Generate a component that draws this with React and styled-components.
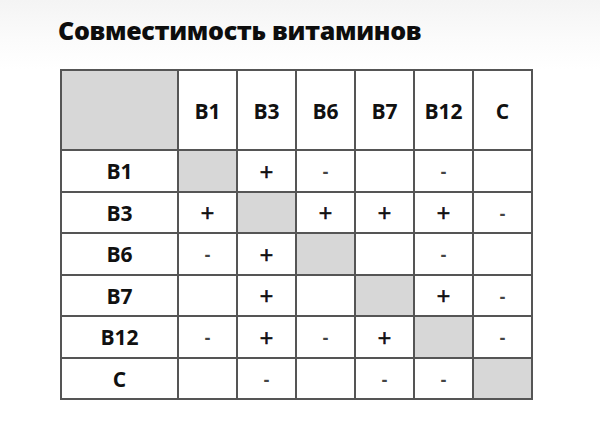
import React from "react";
import styled, { createGlobalStyle } from "styled-components";

const Global = createGlobalStyle`
  html, body { margin: 0; padding: 0; background: #fff; }
  body { font-family: "Open Sans", "Liberation Sans", sans-serif; color: #111; }
`;

const Page = styled.div`
  width: 600px;
  height: 437px;
  box-sizing: border-box;
  padding: 13px 0 0 58px;
  background: linear-gradient(#f4f4f4 0px, #fbfbfb 40px, #ffffff 70px);
  overflow: hidden;
`;

const Title = styled.h1`
  margin: 0;
  font-size: 25px;
  font-weight: 800;
  line-height: 34px;
  letter-spacing: -0.3px;
  color: #0d0d0d;
`;

const Grid = styled.div`
  margin: 22px 0 0 2px;
  display: grid;
  grid-template-columns: 115px repeat(6, 57px);
  grid-template-rows: 78px repeat(6, 39.5px);
  gap: 2px;
  padding: 2px;
  background: #555;
  width: max-content;
`;

const Cell = styled.div`
  background: ${(p) => (p.$shaded ? "#d7d7d7" : "#fff")};
  display: flex;
  align-items: center;
  justify-content: center;
  font-size: 21px;
  font-weight: 700;
  color: #111;
  padding-top: ${(p) => (p.$head ? "1px" : "3px")};
  box-sizing: border-box;
`;

const Sign = styled.span`
  font-family: "Liberation Sans", sans-serif;
  font-size: ${(p) => (p.$minus ? "18px" : "23px")};
  font-weight: ${(p) => (p.$minus ? 700 : 400)};
  color: ${(p) => (p.$minus ? "#444" : "#111")};
  -webkit-text-stroke: ${(p) => (p.$minus ? "0" : "0.6px #111")};
  line-height: 1;
`;

const cols = ["B1", "B3", "B6", "B7", "B12", "C"];
const data = [
  ["x", "+", "-", "", "-", ""],
  ["+", "x", "+", "+", "+", "-"],
  ["-", "+", "x", "", "-", ""],
  ["", "+", "", "x", "+", "-"],
  ["-", "+", "-", "+", "x", "-"],
  ["", "-", "", "-", "-", "x"],
];

export default function App() {
  return (
    <>
      <Global />
      <Page>
        <Title>Совместимость витаминов</Title>
        <Grid>
          <Cell $shaded />
          {cols.map((c) => (
            <Cell key={c} $head>{c}</Cell>
          ))}
          {data.map((row, i) => (
            <React.Fragment key={cols[i]}>
              <Cell $head>{cols[i]}</Cell>
              {row.map((v, j) => (
                <Cell key={j} $shaded={v === "x"}>
                  {v === "+" || v === "-" ? <Sign $minus={v === "-"}>{v}</Sign> : null}
                </Cell>
              ))}
            </React.Fragment>
          ))}
        </Grid>
      </Page>
    </>
  );
}
